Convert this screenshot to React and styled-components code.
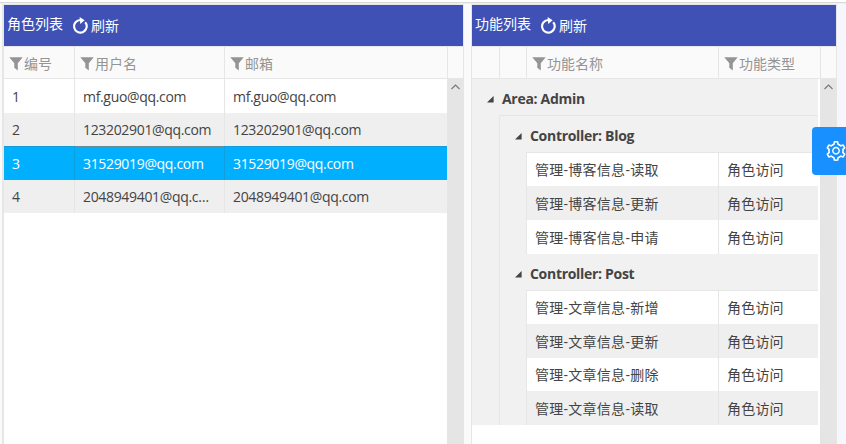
import React from "react";
import styled, { createGlobalStyle, css } from "styled-components";

const line = "#e6e6e6";

const GlobalStyle = createGlobalStyle`
  * { box-sizing: border-box; }
  body { margin: 0; overflow: hidden; background: #f6f7fc; }
`;

const Page = styled.div`
  width: 846px;
  height: 444px;
  display: flex;
  flex-direction: column;
  overflow: hidden;
  position: relative;
  background: #f6f7fc;
  color: #444;
  font: 14px/20px "Open Sans", "Noto Sans CJK SC", sans-serif;
`;

const TopStrip = styled.div`
  height: 4px;
  flex: none;
  background: #fff;
  border-bottom: 1px solid #f0f0f2;
  &::before {
    content: "";
    display: block;
    height: 1px;
    margin-top: 2px;
    background: #dadada;
  }
`;

const Panels = styled.main`
  flex: 1;
  display: flex;
  gap: 7px;
  width: 837px;
  padding-left: 2px;
  background: #fafafa;
`;

const Panel = styled.section`
  width: ${(p) => p.$width}px;
  flex: none;
  display: flex;
  flex-direction: column;
  background: #fff;
  border: 1px solid ${line};
  border-left-width: ${(p) => p.$edge}px;
  border-bottom: 0;
`;

const Toolbar = styled.header`
  height: 41px;
  flex: none;
  display: flex;
  background: #3f51b5;
  color: #fff;
  padding: 9px 3px 0;
`;

const Title = styled.span`
  margin-right: 9px;
`;

const RefreshButton = styled.button`
  display: flex;
  height: 20px;
  margin-top: 2px;
  padding: 0;
  border: 0;
  background: none;
  color: inherit;
  font: inherit;
  svg { margin: 1px 3px 0 0; flex: none; }
`;

const HeadRow = styled.div`
  height: 33px;
  flex: none;
  display: grid;
  grid-template-columns: ${(p) => p.$columns};
  background: #fafafa;
  border: solid ${line};
  border-width: 1px 0;
  color: #949494;
`;

const HeadCell = styled.div`
  display: flex;
  padding: 7px 0 0 5px;
  border-right: 1px solid ${line};
  white-space: nowrap;
  svg { margin: 3px 1px 0 0; flex: none; }
  &:last-child { border-right: 0; }
`;

const Body = styled.div`
  flex: 1;
  display: flex;
  justify-content: space-between;
`;

const Rows = styled.div`
  width: ${(p) => p.$width}px;
`;

const ScrollTrack = styled.div`
  width: 16px;
  background: #e5e5e5;
  display: flex;
  justify-content: center;
  padding-top: 5px;
`;

const Row = styled.div`
  display: grid;
  grid-template-columns: ${(p) => p.$columns};
  height: ${(p) => p.$height}px;
  background: ${(p) => (p.$alt ? "#efefef" : "#fff")};
  --cell-top: ${(p) => p.$height - 26}px;
  ${(p) =>
    p.$selected &&
    css`
      background: #00b0ff;
      color: #fff;
      box-shadow: inset 0 1px #159bd6;
      --divider: #0f9fdd;
    `}
`;

const Cell = styled.div`
  min-width: 0;
  padding: var(--cell-top) 8px 0;
  border-right: 1px solid var(--divider, ${line});
  white-space: nowrap;
  overflow: hidden;
  text-overflow: ellipsis;
  letter-spacing: ${(p) => p.$spacing || 0}px;
  &:last-child { border-right: 0; }
  ${(p) =>
    p.$focused &&
    css`
      box-shadow: inset 0 0 0 1px #688c9c;
    `}
`;

const Group = styled.div`
  background: #f1f1f1;
`;

const GroupHead = styled.div`
  height: 36px;
  display: flex;
  padding: 10px 0 0 15px;
  font-weight: 700;
  letter-spacing: -0.3px;
  svg { margin: 7px 8px 0 0; flex: none; }
`;

const Nested = styled.div`
  margin-left: ${(p) => p.$indent}px;
  border-left: 1px solid ${line};
  border-top: 1px solid ${line};
`;

const SettingsTab = styled.button`
  position: absolute;
  left: 812px;
  top: 127px;
  width: 48px;
  height: 48px;
  padding: 0 0 0 14px;
  border: 0;
  border-radius: 4px;
  background: #1890ff;
  color: #fff;
  display: flex;
  align-items: center;
`;

const Refresh = () => (
  <svg width="16" height="17" viewBox="0 0 16 17" fill="none">
    <path d="M13.2 5.2A6.3 6.3 0 1 1 8.6 3" stroke="#fff" strokeWidth="2.1" />
    <path d="M7.6 0 L12.6 3.2 L8.3 6.9 Z" fill="#fff" />
  </svg>
);

const Filter = () => (
  <svg width="14" height="14" viewBox="0 0 14 14" fill="#949494">
    <path d="M.3.3h13.4L8.8 6.2v7.3L5.3 10.7V6.2Z" />
  </svg>
);

const Expanded = () => (
  <svg width="7" height="7" viewBox="0 0 7 7">
    <path d="M6.6 0v6.5H0Z" fill="#444" />
  </svg>
);

const ScrollUp = () => (
  <svg width="9" height="6" viewBox="0 0 9 6" fill="none">
    <path d="M.5 5 4.5 1 8.5 5" stroke="#777" strokeWidth="1.1" />
  </svg>
);

const Gear = () => (
  <svg width="20" height="20" viewBox="64 64 896 896" fill="currentColor">
    <path d="M924.8 625.7l-65.5-56c3.1-19 4.7-38.4 4.7-57.8s-1.6-38.8-4.7-57.8l65.5-56a32.03 32.03 0 0 0 9.3-35.2l-.9-2.6a443.74 443.74 0 0 0-79.7-137.9l-1.8-2.1a32.12 32.12 0 0 0-35.1-9.5l-81.3 28.9c-30-24.6-63.5-44-99.7-57.6l-15.7-85a32.05 32.05 0 0 0-25.8-25.7l-2.7-.5c-52.1-9.4-106.9-9.4-159 0l-2.7.5a32.05 32.05 0 0 0-25.8 25.7l-15.8 85.4a351.86 351.86 0 0 0-99 57.4l-81.9-29.1a32 32 0 0 0-35.1 9.5l-1.8 2.1a446.02 446.02 0 0 0-79.7 137.9l-.9 2.6c-4.5 12.5-.8 26.5 9.3 35.2l66.3 56.6c-3.1 18.8-4.6 38-4.6 57.1 0 19.2 1.5 38.4 4.6 57.1L99 625.5a32.03 32.03 0 0 0-9.3 35.2l.9 2.6c18.1 50.4 44.9 96.9 79.7 137.9l1.8 2.1a32.12 32.12 0 0 0 35.1 9.5l81.9-29.1c29.8 24.5 63.1 43.9 99 57.4l15.8 85.4a32.05 32.05 0 0 0 25.8 25.7l2.7.5a449.4 449.4 0 0 0 159 0l2.7-.5a32.05 32.05 0 0 0 25.8-25.7l15.7-85a350 350 0 0 0 99.7-57.6l81.3 28.9a32 32 0 0 0 35.1-9.5l1.8-2.1c34.8-41.1 61.6-87.5 79.7-137.9l.9-2.6c4.5-12.3.8-26.3-9.3-35zM788.3 465.9c2.5 15.1 3.8 30.6 3.8 46.1s-1.3 31-3.8 46.1l-6.6 40.1 74.7 63.9a370.03 370.03 0 0 1-42.6 73.6L721 702.8l-31.4 25.8c-23.9 19.6-50.5 35-79.3 45.8l-38.1 14.3-17.9 97a377.5 377.5 0 0 1-85 0l-17.9-97.2-37.8-14.5c-28.5-10.8-55-26.2-78.7-45.7l-31.4-25.9-93.4 33.2c-17-22.9-31.2-47.6-42.6-73.6l75.5-64.5-6.5-40c-2.4-14.9-3.7-30.3-3.7-45.5 0-15.3 1.2-30.6 3.7-45.5l6.5-40-75.5-64.5c11.3-26.1 25.6-50.7 42.6-73.6l93.4 33.2 31.4-25.9c23.7-19.5 50.2-34.9 78.7-45.7l37.9-14.3 17.9-97.2c28.1-3.2 56.8-3.2 85 0l17.9 97 38.1 14.3c28.7 10.8 55.4 26.2 79.3 45.8l31.4 25.8 92.8-32.9c17 22.9 31.2 47.6 42.6 73.6L781.8 426l6.5 39.9zM512 326c-97.2 0-176 78.8-176 176s78.8 176 176 176 176-78.8 176-176-78.8-176-176-176zm79.2 255.2A111.6 111.6 0 0 1 512 614c-29.9 0-58-11.7-79.2-32.8A111.6 111.6 0 0 1 400 502c0-29.9 11.7-58 32.8-79.2C454 401.6 482.1 390 512 390c29.9 0 58 11.6 79.2 32.8A111.6 111.6 0 0 1 624 502c0 29.9-11.7 58-32.8 79.2z" />
  </svg>
);

const users = [
  { id: 1, mail: "mf.guo@qq.com", height: 34 },
  { id: 2, mail: "123202901@qq.com", height: 33 },
  { id: 3, mail: "31529019@qq.com", height: 34, selected: true },
  { id: 4, mail: "2048949401@qq.com", height: 33 },
];

const controllers = [
  {
    name: "Controller: Blog",
    items: [
      ["管理-博客信息-读取", 33],
      ["管理-博客信息-更新", 34],
      ["管理-博客信息-申请", 34],
    ],
  },
  {
    name: "Controller: Post",
    items: [
      ["管理-文章信息-新增", 33],
      ["管理-文章信息-更新", 34],
      ["管理-文章信息-删除", 33],
      ["管理-文章信息-读取", 34],
    ],
  },
];

function PanelToolbar({ title }) {
  return (
    <Toolbar>
      <Title>{title}</Title>
      <RefreshButton>
        <Refresh />
        刷新
      </RefreshButton>
    </Toolbar>
  );
}

function FilterHead({ children }) {
  return (
    <HeadCell>
      <Filter />
      {children}
    </HeadCell>
  );
}

export default function App() {
  return (
    <Page>
      <GlobalStyle />
      <TopStrip />
      <Panels>
        <Panel $width={462} $edge={2}>
          <PanelToolbar title="角色列表" />
          <HeadRow $columns="71px 150px 223px 1fr">
            <FilterHead>编号</FilterHead>
            <FilterHead>用户名</FilterHead>
            <FilterHead>邮箱</FilterHead>
            <HeadCell />
          </HeadRow>
          <Body>
            <Rows $width={443}>
              {users.map((u, i) => (
                <Row
                  key={u.id}
                  $columns="71px 150px 1fr"
                  $height={u.height}
                  $alt={i % 2 === 1}
                  $selected={u.selected}
                >
                  <Cell>{u.id}</Cell>
                  <Cell $focused={u.selected} $spacing={-0.33}>
                    {u.mail}
                  </Cell>
                  <Cell $spacing={-0.33}>{u.mail}</Cell>
                </Row>
              ))}
            </Rows>
            <ScrollTrack>
              <ScrollUp />
            </ScrollTrack>
          </Body>
        </Panel>
        <Panel $width={366} $edge={1}>
          <PanelToolbar title="功能列表" />
          <HeadRow $columns="28px 27px 192px 102px 1fr">
            <HeadCell />
            <HeadCell />
            <FilterHead>功能名称</FilterHead>
            <FilterHead>功能类型</FilterHead>
            <HeadCell />
          </HeadRow>
          <Body>
            <Rows $width={346}>
              <Group>
                <GroupHead>
                  <Expanded />
                  Area: Admin
                </GroupHead>
                <Nested $indent={27}>
                  {controllers.map((c) => (
                    <React.Fragment key={c.name}>
                      <GroupHead>
                        <Expanded />
                        {c.name}
                      </GroupHead>
                      <Nested $indent={26}>
                        {c.items.map(([name, height], i) => (
                          <Row
                            key={name}
                            $columns="192px 1fr"
                            $height={height}
                            $alt={i % 2 === 1}
                          >
                            <Cell $spacing={0.27}>{name}</Cell>
                            <Cell $spacing={0.2}>角色访问</Cell>
                          </Row>
                        ))}
                      </Nested>
                    </React.Fragment>
                  ))}
                </Nested>
              </Group>
            </Rows>
            <ScrollTrack>
              <ScrollUp />
            </ScrollTrack>
          </Body>
        </Panel>
      </Panels>
      <SettingsTab aria-label="settings">
        <Gear />
      </SettingsTab>
    </Page>
  );
}
